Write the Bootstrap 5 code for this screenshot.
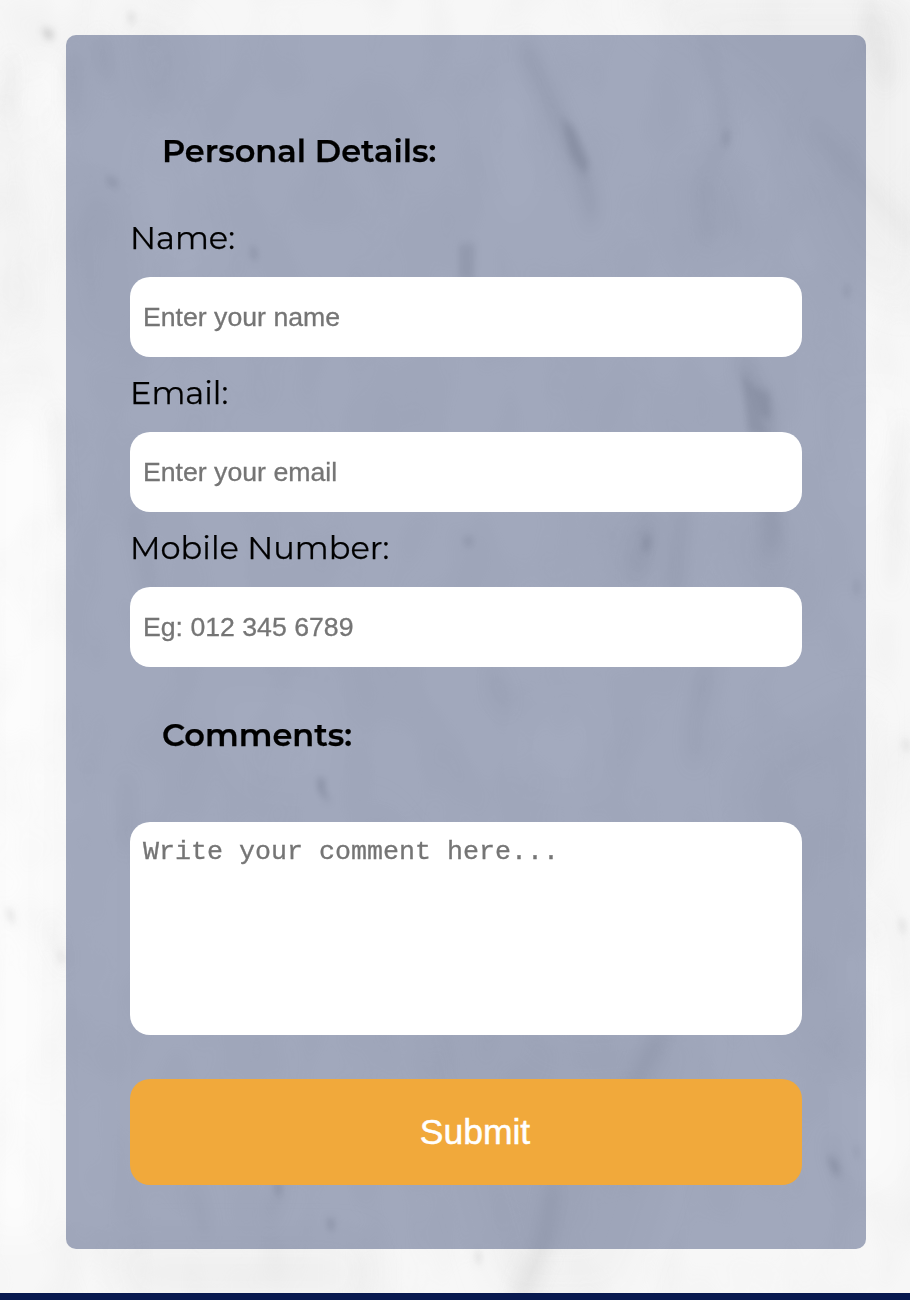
<!DOCTYPE html>
<html lang="en">
<head>
<meta charset="utf-8">
<meta name="viewport" content="width=device-width, initial-scale=1">
<title>Contact form</title>
<link rel="stylesheet" href="https://cdn.jsdelivr.net/npm/bootstrap@5.3.0/dist/css/bootstrap.min.css">
<style>
  body { background: #f7f7f7; color: #000; font-family: Montserrat, Inter, sans-serif; }
  .page { height: 1300px; padding: 35px 44px 0 66px; }
  .marble { z-index: 0; }
  .panel { z-index: 1; height: 1214px; padding: 96px 64px 0; border-radius: 10px; background: rgba(9, 29, 84, .36); }
  .section-title { height: 40px; margin: 0 0 0 32px; font-size: 32px; line-height: 40px; font-weight: 600; }
  .field-label { height: 40px; margin: 0 0 19px; font-size: 32px; line-height: 40px; }
  .section-title, .field-label { -webkit-text-stroke: .25px #000; }
  .details { margin-top: 47px; gap: 16px; }
  .entry, .entry:focus { height: 80px; padding: 0 13px; border: 0; border-radius: 20px; background: #fff; font: 26.67px "Liberation Sans", Arial, sans-serif; }
  .entry::placeholder { color: #757575; opacity: 1; -webkit-text-stroke: .3px #757575; }
  textarea.entry { height: 213px; margin-top: 67px; padding: 15px 13px; font: 26.67px/30px "Liberation Mono", "Courier New", monospace; resize: none; }
  .comments-title { margin-top: 48px; }
  .send { height: 106px; margin-top: 44px; padding: 1px 0 0 18px; border: 0; border-radius: 20px; background: #f1a93b; color: #fff; font: 35.5px "Liberation Sans", Arial, sans-serif; -webkit-text-stroke: .5px #fff; }
  .send:hover { background: #e79d2c; color: #fff; }
  .footer-strip { z-index: 1; height: 7px; margin: 44px -44px 0 -66px; background: #08194f; }
</style>
</head>
<body>
<main class="page position-relative overflow-hidden">
  <svg class="marble position-absolute top-0 start-0" width="910" height="1300" viewBox="0 0 910 1300" aria-hidden="true">
    <defs>
      <filter id="wide" x="-60%" y="-30%" width="220%" height="160%"><feGaussianBlur stdDeviation="18"/></filter>
      <filter id="soft" x="-20%" y="-20%" width="140%" height="140%"><feGaussianBlur stdDeviation="7 10"/></filter>
      <filter id="fine" x="-20%" y="-20%" width="140%" height="140%"><feGaussianBlur stdDeviation="3.2 4"/></filter>
      <filter id="grain" x="0" y="0" width="100%" height="100%">
        <feTurbulence type="fractalNoise" baseFrequency=".02 .011" numOctaves="2" seed="8"/>
        <feColorMatrix values="0 0 0 0 .5  0 0 0 0 .5  0 0 0 0 .5  .16 0 0 0 -.065"/>
      </filter>
    </defs>
    <!-- light and dark clouds -->
    <g filter="url(#wide)">
      <path fill="#fff" d="M-20 390H60L50 1240H-20z" opacity=".6"/>
      <path fill="#fff" d="M35 40L65 80 50 150 25 110zM120 140L190 100 225 260 160 290zM515 50L545 180 510 250 480 130z" opacity=".55"/>
      <path fill="#fff" d="M200 680L340 690 330 800 240 790zM520 700L600 690 610 800 510 790zM80 780H120V1220H80z" opacity=".4"/>
      <path fill="#e9e9e9" d="M640 0H910V310L840 260 770 100zM690 170L720 160 740 250 700 255z" opacity=".5"/>
      <path fill="#e9e9e9" d="M0 80L20 60 30 330 0 340zM120 0L190 40 170 130 130 90zM70 185L125 190 140 350 80 330z" opacity=".4"/>
      <path fill="#e9e9e9" d="M360 800L560 1040 700 1030 620 1290 500 1290zM740 770L866 700 850 1070 790 1050z" opacity=".35"/>
      <path fill="#e9e9e9" d="M110 1245H360V1300H130zM600 520L670 500 680 600 610 580zM730 520L790 510 790 590 745 590z" opacity=".5"/>
      <path fill="#fff" d="M820 390L910 380 900 470 850 540zM840 930L890 900 900 1170 840 1200z" opacity=".4"/>
    </g>
    <rect width="910" height="1300" filter="url(#grain)"/>
    <!-- drifting veins -->
    <g filter="url(#soft)" fill="none" stroke="#c3c3c3" stroke-linecap="round">
      <path d="M527 50Q552 105 574 155T590 215" stroke-width="13" opacity=".34"/>
      <path d="M705 45Q722 95 725 135L703 180 708 235" stroke-width="11" opacity=".17"/>
      <path d="M815 130Q855 172 905 232M870 15L885 75" stroke-width="12" opacity=".2"/>
      <path d="M100 45L108 75M72 65V110" stroke-width="13" opacity=".2"/>
      <path d="M745 365L767 410 773 540" stroke-width="18" opacity=".34"/>
      <path d="M683 513L675 590M650 525L635 570" stroke-width="16" opacity=".22"/>
      <path d="M705 670Q690 730 694 755M495 680L505 700M135 520L150 590" stroke-width="14" opacity=".18"/>
      <path d="M126 785V840" stroke-width="12" opacity=".14"/>
      <path d="M660 1035Q642 1070 628 1100M553 1190L545 1240 520 1300" stroke-width="18" opacity=".3"/>
      <path d="M280 1185L270 1215M195 1190L205 1230M832 1145L844 1185" stroke-width="13" opacity=".16"/>
      <path d="M902 430L892 580M57 420L65 520M12 65L8 110M50 930L65 960" stroke-width="10" opacity=".14"/>
    </g>
    <!-- darker flecks -->
    <g filter="url(#fine)" fill="#a7a7a7">
      <path d="M42 28L55 33 52 39 44 36z" opacity=".6"/>
      <path d="M561 118L574 128 589 163 585 176 571 157z" opacity=".36"/>
      <path d="M459 244L475 243 474 281 459 280z" opacity=".26"/>
      <path d="M742 373L754 386 770 393 771 420 759 416 768 434H748z" opacity=".32"/>
      <path d="M105 175L118 180 119 189 107 184zM249 246L258 250 257 261 251 258z" opacity=".33"/>
      <path d="M724 132L730 130 729 145 722 145zM844 287L850 285 849 297 844 296zM128 12L136 15 133 24 128 20z" opacity=".3"/>
      <path d="M462 538L473 537 473 545 465 545zM643 535L652 538 648 554 643 549zM855 582L859 580 858 596 854 591z" opacity=".33"/>
      <path d="M317 778L326 780 323 788 331 801 323 797 318 788z" opacity=".5"/>
      <path d="M326 1219L335 1220 333 1231 329 1229zM274 1182L281 1184 281 1197 276 1192z" opacity=".42"/>
      <path d="M826 1156L837 1160 841 1174 834 1175zM854 1146L859 1150 857 1160zM476 1253L481 1253 480 1264 476 1260z" opacity=".38"/>
      <path d="M5 908L13 910 15 925 9 921zM59 950L63 954 64 965 58 958zM898 918L906 922 905 934 900 931zM902 740L910 742V752L903 748z" opacity=".25"/>
    </g>
  </svg>

  <form class="panel position-relative">
    <h2 class="section-title"><span>Personal Details:</span></h2>
    <div class="details d-flex flex-column">
      <div>
        <label class="field-label d-block" for="name">Name:</label>
        <input id="name" class="entry form-control" type="text" placeholder="Enter your name">
      </div>
      <div>
        <label class="field-label d-block" for="email">Email:</label>
        <input id="email" class="entry form-control" type="email" placeholder="Enter your email">
      </div>
      <div>
        <label class="field-label d-block" for="phone">Mobile Number:</label>
        <input id="phone" class="entry form-control" type="tel" placeholder="Eg: 012 345 6789">
      </div>
    </div>
    <h2 class="section-title comments-title"><span>Comments:</span></h2>
    <textarea class="entry form-control" aria-label="Comments" placeholder="Write your comment here..."></textarea>
    <button class="send btn w-100" type="submit">Submit</button>
  </form>
  <footer class="footer-strip position-relative"></footer>
</main>
<script src="https://cdn.jsdelivr.net/npm/bootstrap@5.3.0/dist/js/bootstrap.bundle.min.js"></script>
</body>
</html>
